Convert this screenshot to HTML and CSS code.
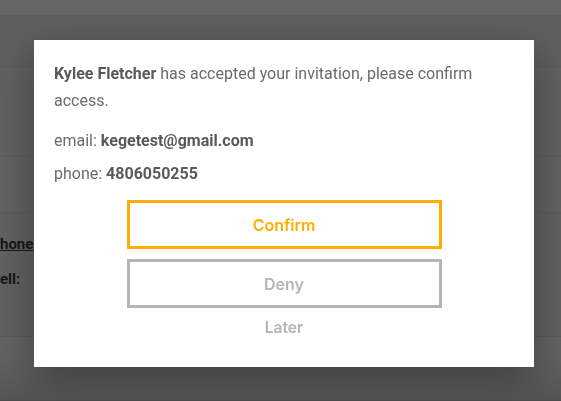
FILE: index.html
```html
<!DOCTYPE html>
<html>
<head>
<meta charset="utf-8">
<link rel="stylesheet" href="styles.css">
</head>
<body>
<div class="page">
  <div class="band"></div>
  <div class="row r1"></div>
  <div class="row r2"></div>
  <div class="row r3"></div>
  <div class="row r4">
    <div class="cut"><a class="link">hone</a></div>
    <div class="cut cell"><b>ell:</b></div>
  </div>
  <div class="row r5"></div>
</div>
<div class="overlay">
  <div class="modal">
    <p class="msg"><b>Kylee Fletcher</b> has accepted your invitation, please confirm access.</p>
    <p class="info">email: <b>kegetest@gmail.com</b></p>
    <p class="info">phone: <b>4806050255</b></p>
    <div class="actions">
      <button class="btn confirm">Confirm</button>
      <button class="btn deny">Deny</button>
      <button class="later">Later</button>
    </div>
  </div>
</div>
</body>
</html>
```
FILE: styles.css
```css
html, body {
  margin: 0;
  padding: 0;
  height: 100%;
  overflow: hidden;
}
body {
  font-family: Roboto, "Liberation Sans", sans-serif;
  background: #f2f2f2;
}
.page {
  display: flex;
  flex-direction: column;
}
.band {
  height: 15px;
  background: #ffffff;
}
.row {
  border-bottom: 1px solid #e2e2e2;
  background: #f0f0f0;
}
.r1 { height: 51px; background: #ececec; }
.r2 { height: 89px; background: #f2f2f2; }
.r3 { height: 55px; background: #f4f4f4; }
.r4 {
  height: 124px;
  background: #f2f2f2;
  padding-top: 21px;
  box-sizing: border-box;
  overflow: hidden;
}
.r5 { height: 63px; background: #f6f6f6; }
.cut {
  font-size: 15px;
  line-height: 20px;
  font-weight: 700;
  color: #3a3a3a;
}
.cut b { color: #3a3a3a; }
.link {
  text-decoration: underline;
  color: #3a3a3a;
}
.cell {
  margin-top: 15px;
}
.overlay {
  position: fixed;
  inset: 0;
  background: linear-gradient(to bottom, rgba(0,0,0,0.6) 0%, rgba(0,0,0,0.6) 88%, rgba(0,0,0,0.66) 100%);
}
.modal {
  margin: 40px 0 0 34px;
  width: 500px;
  height: 327px;
  box-sizing: border-box;
  background: #fff;
  padding: 20px 20px 0 20px;
  box-shadow: 0 12px 40px rgba(0,0,0,0.35);
}
.msg {
  margin: 0 0 10px 0;
  font-size: 16px;
  line-height: 27px;
  color: #6b6b6b;
}
.info {
  margin: 0;
  font-size: 16px;
  line-height: 33px;
  color: #6b6b6b;
}
b {
  color: #595959;
  font-weight: 700;
}
.actions {
  margin-top: 10px;
  display: flex;
  flex-direction: column;
  align-items: center;
  gap: 10px;
}
.btn {
  width: 315px;
  height: 49px;
  box-sizing: border-box;
  background: #fff;
  font-family: Inter, "Open Sans", sans-serif;
  font-weight: 600;
  font-size: 16px;
  cursor: pointer;
  padding: 0;
}
.confirm {
  border: 3px solid #ffae00;
  color: #ffae00;
}
.deny {
  border: 3px solid #b5b5b5;
  color: #b5b5b5;
}
.later {
  margin-top: 0;
  border: none;
  background: none;
  font-family: Inter, "Open Sans", sans-serif;
  font-weight: 600;
  font-size: 15.5px;
  color: #b5b5b5;
  padding: 0;
  line-height: 20px;
}
```
